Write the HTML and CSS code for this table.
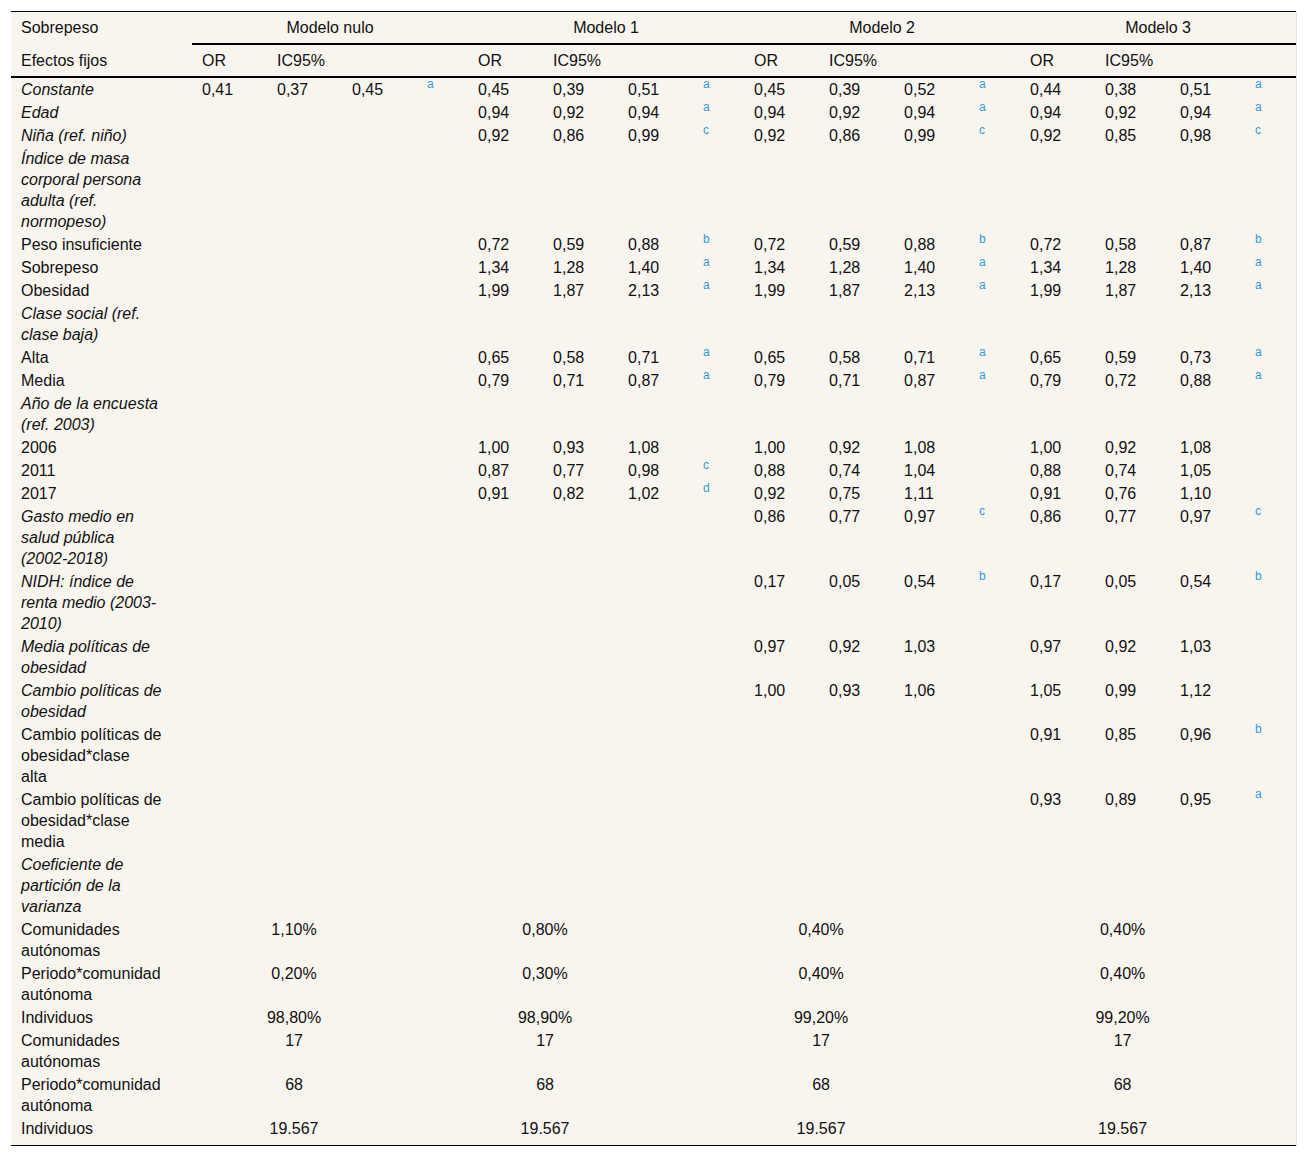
FILE: index.html
```html
<!DOCTYPE html>
<html lang="es">
<head>
<meta charset="utf-8">
<title>Tabla</title>
<link rel="stylesheet" href="styles.css">
</head>
<body>
<div class="wrap">
<table class="t">
<colgroup>
<col class="c-lab">
<col class="c-n"><col class="c-n"><col class="c-n"><col class="c-s">
<col class="c-n"><col class="c-n"><col class="c-n"><col class="c-s">
<col class="c-n"><col class="c-n"><col class="c-n"><col class="c-s">
<col class="c-n"><col class="c-n"><col class="c-n"><col class="c-s">
</colgroup>
<thead>
<tr class="h1">
<th class="hl">Sobrepeso</th>
<th class="hm" colspan="4">Modelo nulo</th>
<th class="hm" colspan="4">Modelo 1</th>
<th class="hm" colspan="4">Modelo 2</th>
<th class="hm" colspan="4">Modelo 3</th>
</tr>
<tr class="h2">
<th class="hl">Efectos fijos</th>
<th>OR</th><th colspan="3">IC95%</th>
<th>OR</th><th colspan="3">IC95%</th>
<th>OR</th><th colspan="3">IC95%</th>
<th>OR</th><th colspan="3">IC95%</th>
</tr>
</thead>
<tbody>
<tr>
<td class="l i">Constante</td>
<td>0,41</td><td>0,37</td><td>0,45</td><td class="sp">a</td>
<td>0,45</td><td>0,39</td><td>0,51</td><td class="sp">a</td>
<td>0,45</td><td>0,39</td><td>0,52</td><td class="sp">a</td>
<td>0,44</td><td>0,38</td><td>0,51</td><td class="sp">a</td>
</tr>
<tr>
<td class="l i">Edad</td>
<td></td><td></td><td></td><td class="sp"></td>
<td>0,94</td><td>0,92</td><td>0,94</td><td class="sp">a</td>
<td>0,94</td><td>0,92</td><td>0,94</td><td class="sp">a</td>
<td>0,94</td><td>0,92</td><td>0,94</td><td class="sp">a</td>
</tr>
<tr>
<td class="l i">Niña (ref. niño)</td>
<td></td><td></td><td></td><td class="sp"></td>
<td>0,92</td><td>0,86</td><td>0,99</td><td class="sp">c</td>
<td>0,92</td><td>0,86</td><td>0,99</td><td class="sp">c</td>
<td>0,92</td><td>0,85</td><td>0,98</td><td class="sp">c</td>
</tr>
<tr>
<td class="l i">Índice de masa<br>corporal persona<br>adulta (ref.<br>normopeso)</td>
<td></td><td></td><td></td><td class="sp"></td>
<td></td><td></td><td></td><td class="sp"></td>
<td></td><td></td><td></td><td class="sp"></td>
<td></td><td></td><td></td><td class="sp"></td>
</tr>
<tr>
<td class="l">Peso insuficiente</td>
<td></td><td></td><td></td><td class="sp"></td>
<td>0,72</td><td>0,59</td><td>0,88</td><td class="sp">b</td>
<td>0,72</td><td>0,59</td><td>0,88</td><td class="sp">b</td>
<td>0,72</td><td>0,58</td><td>0,87</td><td class="sp">b</td>
</tr>
<tr>
<td class="l">Sobrepeso</td>
<td></td><td></td><td></td><td class="sp"></td>
<td>1,34</td><td>1,28</td><td>1,40</td><td class="sp">a</td>
<td>1,34</td><td>1,28</td><td>1,40</td><td class="sp">a</td>
<td>1,34</td><td>1,28</td><td>1,40</td><td class="sp">a</td>
</tr>
<tr>
<td class="l">Obesidad</td>
<td></td><td></td><td></td><td class="sp"></td>
<td>1,99</td><td>1,87</td><td>2,13</td><td class="sp">a</td>
<td>1,99</td><td>1,87</td><td>2,13</td><td class="sp">a</td>
<td>1,99</td><td>1,87</td><td>2,13</td><td class="sp">a</td>
</tr>
<tr>
<td class="l i">Clase social (ref.<br>clase baja)</td>
<td></td><td></td><td></td><td class="sp"></td>
<td></td><td></td><td></td><td class="sp"></td>
<td></td><td></td><td></td><td class="sp"></td>
<td></td><td></td><td></td><td class="sp"></td>
</tr>
<tr>
<td class="l">Alta</td>
<td></td><td></td><td></td><td class="sp"></td>
<td>0,65</td><td>0,58</td><td>0,71</td><td class="sp">a</td>
<td>0,65</td><td>0,58</td><td>0,71</td><td class="sp">a</td>
<td>0,65</td><td>0,59</td><td>0,73</td><td class="sp">a</td>
</tr>
<tr>
<td class="l">Media</td>
<td></td><td></td><td></td><td class="sp"></td>
<td>0,79</td><td>0,71</td><td>0,87</td><td class="sp">a</td>
<td>0,79</td><td>0,71</td><td>0,87</td><td class="sp">a</td>
<td>0,79</td><td>0,72</td><td>0,88</td><td class="sp">a</td>
</tr>
<tr>
<td class="l i">Año de la encuesta<br>(ref. 2003)</td>
<td></td><td></td><td></td><td class="sp"></td>
<td></td><td></td><td></td><td class="sp"></td>
<td></td><td></td><td></td><td class="sp"></td>
<td></td><td></td><td></td><td class="sp"></td>
</tr>
<tr>
<td class="l">2006</td>
<td></td><td></td><td></td><td class="sp"></td>
<td>1,00</td><td>0,93</td><td>1,08</td><td class="sp"></td>
<td>1,00</td><td>0,92</td><td>1,08</td><td class="sp"></td>
<td>1,00</td><td>0,92</td><td>1,08</td><td class="sp"></td>
</tr>
<tr>
<td class="l">2011</td>
<td></td><td></td><td></td><td class="sp"></td>
<td>0,87</td><td>0,77</td><td>0,98</td><td class="sp">c</td>
<td>0,88</td><td>0,74</td><td>1,04</td><td class="sp"></td>
<td>0,88</td><td>0,74</td><td>1,05</td><td class="sp"></td>
</tr>
<tr>
<td class="l">2017</td>
<td></td><td></td><td></td><td class="sp"></td>
<td>0,91</td><td>0,82</td><td>1,02</td><td class="sp">d</td>
<td>0,92</td><td>0,75</td><td>1,11</td><td class="sp"></td>
<td>0,91</td><td>0,76</td><td>1,10</td><td class="sp"></td>
</tr>
<tr>
<td class="l i">Gasto medio en<br>salud pública<br>(2002-2018)</td>
<td></td><td></td><td></td><td class="sp"></td>
<td></td><td></td><td></td><td class="sp"></td>
<td>0,86</td><td>0,77</td><td>0,97</td><td class="sp">c</td>
<td>0,86</td><td>0,77</td><td>0,97</td><td class="sp">c</td>
</tr>
<tr>
<td class="l i">NIDH: índice de<br>renta medio (2003-<br>2010)</td>
<td></td><td></td><td></td><td class="sp"></td>
<td></td><td></td><td></td><td class="sp"></td>
<td>0,17</td><td>0,05</td><td>0,54</td><td class="sp">b</td>
<td>0,17</td><td>0,05</td><td>0,54</td><td class="sp">b</td>
</tr>
<tr>
<td class="l i">Media políticas de<br>obesidad</td>
<td></td><td></td><td></td><td class="sp"></td>
<td></td><td></td><td></td><td class="sp"></td>
<td>0,97</td><td>0,92</td><td>1,03</td><td class="sp"></td>
<td>0,97</td><td>0,92</td><td>1,03</td><td class="sp"></td>
</tr>
<tr>
<td class="l i">Cambio políticas de<br>obesidad</td>
<td></td><td></td><td></td><td class="sp"></td>
<td></td><td></td><td></td><td class="sp"></td>
<td>1,00</td><td>0,93</td><td>1,06</td><td class="sp"></td>
<td>1,05</td><td>0,99</td><td>1,12</td><td class="sp"></td>
</tr>
<tr>
<td class="l">Cambio políticas de<br>obesidad*clase<br>alta</td>
<td></td><td></td><td></td><td class="sp"></td>
<td></td><td></td><td></td><td class="sp"></td>
<td></td><td></td><td></td><td class="sp"></td>
<td>0,91</td><td>0,85</td><td>0,96</td><td class="sp">b</td>
</tr>
<tr>
<td class="l">Cambio políticas de<br>obesidad*clase<br>media</td>
<td></td><td></td><td></td><td class="sp"></td>
<td></td><td></td><td></td><td class="sp"></td>
<td></td><td></td><td></td><td class="sp"></td>
<td>0,93</td><td>0,89</td><td>0,95</td><td class="sp">a</td>
</tr>
<tr>
<td class="l i">Coeficiente de<br>partición de la<br>varianza</td>
<td colspan="4"></td><td colspan="4"></td><td colspan="4"></td><td colspan="4"></td>
</tr>
<tr>
<td class="l">Comunidades<br>autónomas</td>
<td colspan="4" class="m0">1,10%</td><td colspan="4" class="m1">0,80%</td><td colspan="4" class="m2">0,40%</td><td colspan="4" class="m3">0,40%</td>
</tr>
<tr>
<td class="l">Periodo*comunidad<br>autónoma</td>
<td colspan="4" class="m0">0,20%</td><td colspan="4" class="m1">0,30%</td><td colspan="4" class="m2">0,40%</td><td colspan="4" class="m3">0,40%</td>
</tr>
<tr>
<td class="l">Individuos</td>
<td colspan="4" class="m0">98,80%</td><td colspan="4" class="m1">98,90%</td><td colspan="4" class="m2">99,20%</td><td colspan="4" class="m3">99,20%</td>
</tr>
<tr>
<td class="l">Comunidades<br>autónomas</td>
<td colspan="4" class="m0">17</td><td colspan="4" class="m1">17</td><td colspan="4" class="m2">17</td><td colspan="4" class="m3">17</td>
</tr>
<tr>
<td class="l">Periodo*comunidad<br>autónoma</td>
<td colspan="4" class="m0">68</td><td colspan="4" class="m1">68</td><td colspan="4" class="m2">68</td><td colspan="4" class="m3">68</td>
</tr>
<tr class="last">
<td class="l">Individuos</td>
<td colspan="4" class="m0">19.567</td><td colspan="4" class="m1">19.567</td><td colspan="4" class="m2">19.567</td><td colspan="4" class="m3">19.567</td>
</tr>
</tbody>
</table>
</div>
</body>
</html>
```

FILE: styles.css
```css
html, body {
  margin: 0;
  padding: 0;
  background: #ffffff;
}

.wrap {
  padding: 11px 11px;
}

.t {
  width: 1285px;
  table-layout: fixed;
  border-collapse: separate;
  border-spacing: 0;
  background: #f8f5ef;
  border-top: 1px solid #000;
  border-bottom: 1px solid #000;
  box-shadow: 1px 0 0 #e4e4e4;
  font-family: "Liberation Sans", Arial, sans-serif;
  font-size: 16px;
  line-height: 21px;
  color: #111;
}

.c-lab { width: 181px; }
.c-n { width: 75px; }
.c-s { width: 51px; }

.t th,
.t td {
  box-sizing: border-box;
  vertical-align: top;
  text-align: left;
  white-space: nowrap;
  font-weight: normal;
}

.t th {
  padding: 5px 10px;
}

.h1 .hm {
  text-align: center;
  border-bottom: 2px solid #000;
}

.h2 th {
  border-bottom: 2px solid #000;
}

.t td {
  padding: 1px 10px;
}

.t td.i {
  font-style: italic;
}

.t td.sp {
  padding: 0 10px;
  font-size: 12px;
  line-height: 12px;
  color: #3499db;
}

.t td.m0,
.t td.m1,
.t td.m2,
.t td.m3 {
  text-align: center;
}

.t td.m0 { padding-left: 0; padding-right: 72px; }
.t td.m1 { padding-left: 0; padding-right: 122px; }
.t td.m2 { padding-left: 0; padding-right: 122px; }
.t td.m3 { padding-left: 0; padding-right: 71px; }

.last td {
  padding-bottom: 6px;
}
```
